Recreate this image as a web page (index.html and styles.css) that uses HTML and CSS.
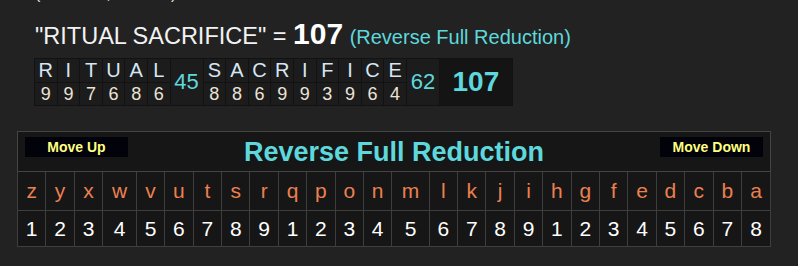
FILE: index.html
```html
<!DOCTYPE html>
<html>
<head>
<meta charset="utf-8">
<link rel="stylesheet" href="styles.css">
</head>
<body>
<div class="result">
  <div class="meta">(15 letters, 2 words)</div>
  <div class="phrase">"RITUAL SACRIFICE" = <b class="total">107</b> <span class="cipher">(Reverse Full Reduction)</span></div>
  <table class="breakdown">
    <tr>
      <td class="bl">R</td><td class="bl">I</td><td class="bl">T</td><td class="bl">U</td><td class="bl">A</td><td class="bl">L</td>
      <td class="bs" rowspan="2">45</td>
      <td class="bl">S</td><td class="bl">A</td><td class="bl">C</td><td class="bl">R</td><td class="bl">I</td><td class="bl">F</td><td class="bl">I</td><td class="bl">C</td><td class="bl">E</td>
      <td class="bs" rowspan="2">62</td>
      <td class="bt" rowspan="2">107</td>
    </tr>
    <tr>
      <td class="bn">9</td><td class="bn">9</td><td class="bn">7</td><td class="bn">6</td><td class="bn">8</td><td class="bn">6</td>
      <td class="bn">8</td><td class="bn">8</td><td class="bn">6</td><td class="bn">9</td><td class="bn">9</td><td class="bn">3</td><td class="bn">9</td><td class="bn">6</td><td class="bn">4</td>
    </tr>
  </table>
</div>

<table class="chart">
  <tr>
    <th class="head" colspan="26">
      <div class="head-row">
        <button class="move">Move Up</button>
        <div class="title">Reverse Full Reduction</div>
        <button class="move">Move Down</button>
      </div>
    </th>
  </tr>
  <tr class="letters">
    <td>z</td><td>y</td><td>x</td><td>w</td><td>v</td><td>u</td><td>t</td><td>s</td><td>r</td><td>q</td><td>p</td><td>o</td><td>n</td><td>m</td><td>l</td><td>k</td><td>j</td><td>i</td><td>h</td><td>g</td><td>f</td><td>e</td><td>d</td><td>c</td><td>b</td><td>a</td>
  </tr>
  <tr class="values">
    <td>1</td><td>2</td><td>3</td><td>4</td><td>5</td><td>6</td><td>7</td><td>8</td><td>9</td><td>1</td><td>2</td><td>3</td><td>4</td><td>5</td><td>6</td><td>7</td><td>8</td><td>9</td><td>1</td><td>2</td><td>3</td><td>4</td><td>5</td><td>6</td><td>7</td><td>8</td>
  </tr>
</table>
</body>
</html>
```
FILE: styles.css
```css
html, body {
  margin: 0;
  padding: 0;
  background: #222222;
  font-family: "Liberation Sans", Arial, sans-serif;
  overflow: hidden;
}

.result {
  padding-left: 35px;
}

.meta {
  margin-top: -15px;
  font-size: 16px;
  line-height: 18px;
  color: #e6e2d0;
}

.phrase {
  margin-top: 16px;
  font-size: 23.5px;
  line-height: 30px;
  color: #f2f2f2;
  white-space: nowrap;
}

.phrase .total {
  font-size: 30px;
  font-weight: bold;
  color: #ffffff;
}

.phrase .cipher {
  font-size: 20px;
  color: #5ed8dc;
}

.breakdown {
  margin-top: 6px;
  margin-left: -1px;
  border-collapse: collapse;
  background: #151515;
}

.breakdown td {
  border: 1px solid #121212;
  background: #1c1c1c;
  padding: 0;
  text-align: center;
  vertical-align: middle;
}

.breakdown .bl {
  width: 21.6px;
  height: 23px;
  font-size: 20px;
  line-height: 23px;
  color: #d6e6f4;
}

.breakdown .bn {
  height: 22px;
  font-size: 18px;
  line-height: 22px;
  color: #ebe3d6;
}

.breakdown .bs {
  width: 32px;
  font-size: 22px;
  color: #5ed8dc;
}

.breakdown .bt {
  width: 72px;
  font-size: 28px;
  font-weight: bold;
  color: #5ed8dc;
  background: #141414;
}

.chart {
  margin-top: 25px;
  margin-left: 17px;
  width: 754px;
  border-collapse: collapse;
  background: #161616;
  border: 1px solid #444444;
}

.chart th.head {
  border: 1px solid #444444;
  padding: 5px 7px 0;
  height: 34px;
  vertical-align: top;
}

.head-row {
  display: flex;
  align-items: flex-start;
}

.move {
  width: 103px;
  height: 20px;
  padding: 0;
  border: none;
  background: #02020a;
  color: #ffff80;
  font-family: "Liberation Sans", Arial, sans-serif;
  font-weight: bold;
  font-size: 14px;
  line-height: 20px;
  text-align: center;
  flex: none;
}

.title {
  flex: 1;
  text-align: center;
  font-size: 27px;
  line-height: 30px;
  font-weight: bold;
  color: #5ed8dc;
}

.chart td {
  border: 1px solid #3e3e3e;
  text-align: center;
  vertical-align: middle;
  padding: 0 3px;
  font-size: 21px;
}

.chart .letters td {
  height: 38px;
  color: #eb8050;
}

.chart .values td {
  height: 35px;
  color: #ffffff;
}
```
